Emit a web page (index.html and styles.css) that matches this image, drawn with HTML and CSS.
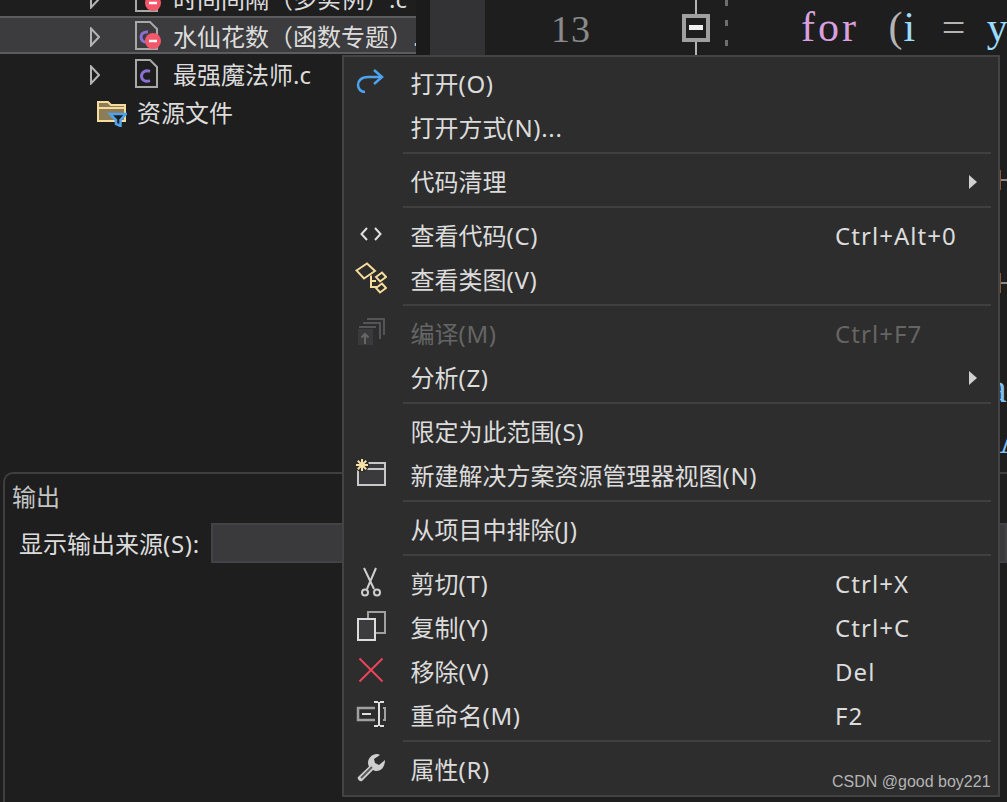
FILE: index.html
```html
<!DOCTYPE html>
<html lang="zh-CN">
<head>
<meta charset="utf-8">
<title>Solution Explorer context menu</title>
<link rel="stylesheet" href="styles.css">
</head>
<body>
<div class="top">
  <div class="explorer">
    <div class="row">
      <svg class="tri" width="10" height="20" viewBox="0 0 10 20"><path d="M1 1.500 9 10 1 18.500Z"/></svg>
      <svg class="file" width="34" height="32" viewBox="0 0 34 32"><path class="sheet" d="M1 1H15L22 8V28H1Z"/><circle class="minus-bg" cx="18" cy="20" r="8"/><path class="minus" d="M14 20H22"/></svg>
      <span class="name">时间间隔（多实例）.c</span>
    </div>
    <div class="row selected">
      <svg class="tri" width="10" height="20" viewBox="0 0 10 20"><path d="M1 1.500 9 10 1 18.500Z"/></svg>
      <svg class="file" width="34" height="32" viewBox="0 0 34 32"><path class="sheet" d="M1 1H15L22 8V28H1Z"/><path class="cee" d="M13 11C8.500 10.500 6 13 6 16C6 19 8.500 21.500 12 21"/><circle class="minus-bg" cx="18" cy="20" r="8"/><path class="minus" d="M14 20H22"/></svg>
      <span class="name">水仙花数（函数专题）.c</span>
    </div>
    <div class="row">
      <svg class="tri" width="10" height="20" viewBox="0 0 10 20"><path d="M1 1.500 9 10 1 18.500Z"/></svg>
      <svg class="file" width="34" height="32" viewBox="0 0 34 32"><path class="sheet" d="M1 1H15L22 8V28H1Z"/><path class="cee" d="M15 12.500C10.500 10.500 6.500 13.500 6.500 17C6.500 21 10.500 23.500 15 21.500"/></svg>
      <span class="name">最强魔法师.c</span>
    </div>
    <div class="row folder-row">
      <svg class="folder" width="30" height="28" viewBox="0 0 30 28"><path class="folder-body" d="M1 3H11L14 6H28V22H1Z"/><path class="folder-line" d="M1 9H28"/><path class="funnel" d="M13 15H29L23.500 21V27L19 25V21Z"/></svg>
      <span class="name">资源文件</span>
    </div>
  </div>
  <div class="editor">
    <div class="strip"></div>
    <div class="gutter"></div>
    <div class="lineno">13</div>
    <div class="fold"><span class="fold-box"><i></i></span></div>
    <div class="guide"></div>
    <div class="code"><span class="kw">for</span> <span class="punc">(</span><span class="var var-i">i</span> <span class="punc">=</span> <span class="var">y</span></div>
    <span class="tick tick-a"></span>
    <span class="tick tick-b"></span>
    <span class="frag frag-a">a</span>
    <span class="frag frag-b">A</span>
  </div>
</div>
<div class="output">
  <div class="output-title">输出</div>
  <div class="output-bar">
    <span class="output-label">显示输出来源<span class="lat">(S):</span></span>
    <span class="output-select"></span>
  </div>
</div>

<div class="menu">
  <div class="item">
    <svg class="ico ico-redo" width="28" height="26" viewBox="0 0 28 26"><path class="st blue" d="M26 8H12C5 8 2 12 2 16C2 20 5 23 9 23"/><path class="st blue" d="M18 1 26 8 18 15"/></svg>
    <span class="label">打开<span class="lat">(O)</span></span>
  </div>
  <div class="item"><span class="label">打开方式<span class="lat">(N)...</span></span></div>
  <div class="sep"></div>
  <div class="item"><span class="label">代码清理</span><span class="arrow"></span></div>
  <div class="sep"></div>
  <div class="item">
    <svg class="ico" width="22" height="14" viewBox="0 0 22 14"><path class="st light" d="M7 1 1.500 7 7 13M15 1 20.500 7 15 13"/></svg>
    <span class="label">查看代码<span class="lat">(C)</span></span><span class="key">Ctrl+Alt+0</span>
  </div>
  <div class="item">
    <svg class="ico" width="32" height="32" viewBox="0 0 32 32"><path class="st yellow" d="M1.500 8.500 12 1.500 20 9 9 16.500Z"/><path class="st yellow" d="M21 15 27 10.500 31 15 25 19.500Z"/><path class="st yellow" d="M21 26 27 21.500 31 26 25 30.500Z"/><path class="st yellow" d="M16 13.500V25H22"/><path class="st yellow" d="M16 19H21"/></svg>
    <span class="label">查看类图<span class="lat">(V)</span></span>
  </div>
  <div class="sep"></div>
  <div class="item disabled">
    <svg class="ico" width="28" height="28" viewBox="0 0 28 28"><path class="st dim" d="M10 1H27V17M6 5H23V21M2 9H19"/><rect class="dim-box" x="1" y="11" width="15" height="16"/><path class="st dim-up" d="M8 26V16M4.500 19.500 8 16 11.500 19.500"/></svg>
    <span class="label">编译<span class="lat">(M)</span></span><span class="key">Ctrl+F7</span>
  </div>
  <div class="item"><span class="label">分析<span class="lat">(Z)</span></span><span class="arrow"></span></div>
  <div class="sep"></div>
  <div class="item"><span class="label">限定为此范围<span class="lat">(S)</span></span></div>
  <div class="item">
    <svg class="ico ico-new" width="32" height="30" viewBox="0 0 32 30"><path class="win" d="M3 5H30V27H3Z"/><path class="st win-line" d="M3 11H30"/><circle class="star-bg" cx="7" cy="7" r="7"/><path class="star" d="M7 1V13M1 7H13M2.800 2.800 11.200 11.200M11.200 2.800 2.800 11.200"/></svg>
    <span class="label">新建解决方案资源管理器视图<span class="lat">(N)</span></span>
  </div>
  <div class="sep"></div>
  <div class="item"><span class="label">从项目中排除<span class="lat">(J)</span></span></div>
  <div class="sep"></div>
  <div class="item">
    <svg class="ico" width="24" height="30" viewBox="0 0 24 30"><path class="st grey" d="M5 1 15 22M17 1 8 22"/><circle class="st grey" cx="6" cy="25.500" r="3"/><circle class="st grey" cx="18" cy="25.500" r="3"/></svg>
    <span class="label">剪切<span class="lat">(T)</span></span><span class="key">Ctrl+X</span>
  </div>
  <div class="item">
    <svg class="ico" width="30" height="30" viewBox="0 0 30 30"><path class="st back" d="M12 8V1H29V22H19"/><rect class="front" x="2" y="8" width="17" height="21"/></svg>
    <span class="label">复制<span class="lat">(Y)</span></span><span class="key">Ctrl+C</span>
  </div>
  <div class="item">
    <svg class="ico" width="26" height="26" viewBox="0 0 26 26"><path class="st red" d="M1.500 1.500 24.500 24.500M24.500 1.500 1.500 24.500"/></svg>
    <span class="label">移除<span class="lat">(V)</span></span><span class="key">Del</span>
  </div>
  <div class="item">
    <svg class="ico" width="30" height="26" viewBox="0 0 30 26"><path class="st back thick" d="M19 7H2V19H19"/><path class="st light" d="M6 13H15"/><path class="st light" d="M18 1H22M28 1H24M23 1V25M18 25H22M28 25H24"/><path class="st back" d="M27 7H29V19H27"/></svg>
    <span class="label">重命名<span class="lat">(M)</span></span><span class="key">F2</span>
  </div>
  <div class="sep"></div>
  <div class="item">
    <svg class="ico" width="28" height="28" viewBox="0 0 28 28"><path class="wrench" d="M20 0C15 0 11 4 11 9C11 10 11.500 11.500 12 12.500L1 23C-.5 24.500 3 28 5 27L16 16C17 16.500 18 17 19.500 17C25 17 28 12 28 6L22 11 18 9 17 5 23 1C22 .5 21 0 20 0Z"/><path class="wrench-slot" d="M4 24 15 13"/></svg>
    <span class="label">属性<span class="lat">(R)</span></span>
  </div>
</div>
<div class="watermark">CSDN @good boy221</div>
</body>
</html>
```
FILE: styles.css
```css
* { box-sizing: border-box; }
html, body { margin: 0; padding: 0; }
body {
  position: relative;
  width: 1007px;
  height: 802px;
  overflow: hidden;
  background: #1e1e1e;
  color: #dcdcdc;
  font-family: "Noto Sans", "Noto Sans CJK SC", sans-serif;
  font-size: 24px;
  display: grid;
  grid-template-rows: 472px 1fr;
}
svg { display: block; flex: none; }

.top { display: flex; min-height: 0; overflow: hidden; }

.explorer {
  width: 416px;
  flex: none;
  margin-top: -22px;
  overflow: hidden;
  background: #1e1e1e;
}
.row {
  height: 38px;
  display: flex;
  align-items: center;
  padding-left: 90px;
  padding-top: 4px;
  white-space: nowrap;
  line-height: 36px;
}
.selected {
  background: #3c3c3e;
  border-top: 2px solid #5c5c5e;
  border-bottom: 2px solid #5c5c5e;
}
.tri { fill: none; stroke: #b4b4b4; stroke-width: 2; }
.file { margin-left: 35px; margin-right: 4px; }
.sheet { fill: none; stroke: #a8a8a8; stroke-width: 2; }
.cee { fill: none; stroke: #8c6fd2; stroke-width: 3; }
.minus-bg { fill: #f4566a; }
.minus { stroke: #fff; stroke-width: 2.500; fill: none; }
.name { display: block; margin-bottom: 1px; }
.folder-row { padding-left: 97px; padding-top: 3px; height: 39px; }
.folder { margin-right: 10px; }
.folder-body { fill: #8d7c58; stroke: #f5dc9c; stroke-width: 2; }
.folder-line { stroke: #f5dc9c; stroke-width: 2; fill: none; }
.funnel { fill: #1e1e1e; stroke: #4da3f0; stroke-width: 2.500; }

.editor {
  position: relative;
  flex: 1;
  display: flex;
  align-items: stretch;
  background: #1e1e1e;
}
.strip { width: 14px; flex: none; background: #1b1b1c; }
.gutter { width: 55px; flex: none; background: #333335; }
.lineno {
  width: 197px;
  flex: none;
  padding: 6px 0 0 66px;
  font-family: "Liberation Serif", serif;
  font-size: 38px;
  line-height: 46px;
  color: #8a8a8a;
  letter-spacing: 1px;
}
.fold {
  position: relative;
  width: 28px;
  flex: none;
  background: linear-gradient(#b4b4b4, #b4b4b4) 13px 0 / 2px 100% no-repeat;
}
.fold-box {
  display: block;
  margin-top: 14px;
  width: 28px;
  height: 28px;
  border: 4px solid #a0a0a0;
  background: #1e1e1e;
  padding: 7px 3px;
}
.fold-box i {
  display: block;
  height: 5px;
  background: #f0f0f0;
}
.guide {
  width: 3px;
  flex: none;
  margin-left: 15px;
  background: repeating-linear-gradient(#6e6e6e 0 6px, transparent 6px 20px);
}
.code {
  margin-left: 73px;
  padding-top: 4px;
  font-family: "Liberation Serif", serif;
  font-size: 42px;
  line-height: 46px;
  white-space: pre;
  color: #b4b4b4;
  word-spacing: 10px;
}
.kw { color: #d8a0df; letter-spacing: 3px; margin-right: 9px; }
.var { color: #9cdcfe; }
.var-i { letter-spacing: 6px; }
.punc { color: #b4b4b4; letter-spacing: 1px; }
.tick {
  position: absolute;
  left: 583px;
  width: 8px;
  height: 20px;
  border-left: 2px solid #8a5a3a;
  background: linear-gradient(#8a8a8a, #8a8a8a) 0 9px / 100% 2px no-repeat;
}
.tick-a { top: 170px; }
.tick-b { top: 273px; }
.frag {
  position: absolute;
  font-family: "Liberation Serif", serif;
  font-size: 40px;
  line-height: 46px;
  color: #7fc0f0;
}
.frag-a { left: 573px; top: 366px; }
.frag-b { left: 583px; top: 417px; }

.output {
  margin-left: 3px;
  background: #1e1e1e;
  border-top: 2px solid #3f3f42;
  border-left: 2px solid #3f3f42;
  border-top-left-radius: 10px;
}
.output-title {
  padding-left: 7px;
  height: 42px;
  line-height: 46px;
  color: #c4c4c4;
}
.output-bar {
  display: flex;
  align-items: center;
  padding-left: 14px;
  margin-top: 7px;
  height: 40px;
}
.output-label { width: 192px; flex: none; white-space: nowrap; line-height: 38px; padding-top: 2px; }
.output-select {
  flex: 1;
  height: 40px;
  background: #3a3a3c;
  border: 2px solid #434346;
}
.lat { letter-spacing: .7px; }

.menu {
  position: absolute;
  left: 342px;
  top: 55px;
  width: 658px;
  height: 742px;
  padding-top: 5px;
  background: #2d2d2d;
  border: 2px solid #434346;
}
.item {
  position: relative;
  height: 44px;
  display: grid;
  grid-template-columns: 59px 432px 1fr;
  align-items: center;
  line-height: 42px;
  white-space: nowrap;
}
.label { grid-column: 2; padding-left: 7.500px; margin-bottom: 1px; }
.key { grid-column: 3; letter-spacing: 1.050px; margin-bottom: 1px; }
.ico { grid-column: 1; grid-row: 1; justify-self: center; position: relative; left: -3px; top: -2px; }
.ico-redo { left: -4px; }
.ico-new { left: -3px; top: -3px; }
.disabled { color: #656565; }
.arrow {
  grid-column: 3;
  justify-self: end;
  margin-right: 21px;
  width: 0;
  height: 0;
  border-left: 8px solid #d0d0d0;
  border-top: 7px solid transparent;
  border-bottom: 7px solid transparent;
}
.sep {
  height: 10px;
  margin: 0 7px 0 59px;
  background: linear-gradient(#3f3f42, #3f3f42) 0 2px / 100% 2px no-repeat;
}
.st { fill: none; stroke-width: 2; }
.thick { stroke-width: 2.500; }
.blue { stroke: #4da3f0; stroke-width: 2.500; }
.light { stroke: #e0e0e0; }
.yellow { stroke: #f5dc9c; }
.dim { stroke: #555558; }
.dim-box { fill: #3a3a3c; }
.dim-up { stroke: #666; }
.grey { stroke: #cfcfcf; }
.back { stroke: #a0a0a0; }
.front { fill: #3c3c3e; stroke: #dcdcdc; stroke-width: 2; }
.red { stroke: #e8455a; }
.win { fill: #3a3a3c; stroke: #c8c8c8; stroke-width: 2; }
.win-line { stroke: #c8c8c8; }
.star-bg { fill: #2d2d2d; }
.star { stroke: #f5e2a6; stroke-width: 2; fill: none; }
.wrench { fill: #cfcfcf; }
.wrench-slot { stroke: #5a5a5a; stroke-width: 2; fill: none; }

.watermark {
  position: absolute;
  left: 832px;
  top: 772px;
  font-family: "Liberation Sans", sans-serif;
  font-size: 16px;
  line-height: 20px;
  color: #b4b4b4;
}
```
